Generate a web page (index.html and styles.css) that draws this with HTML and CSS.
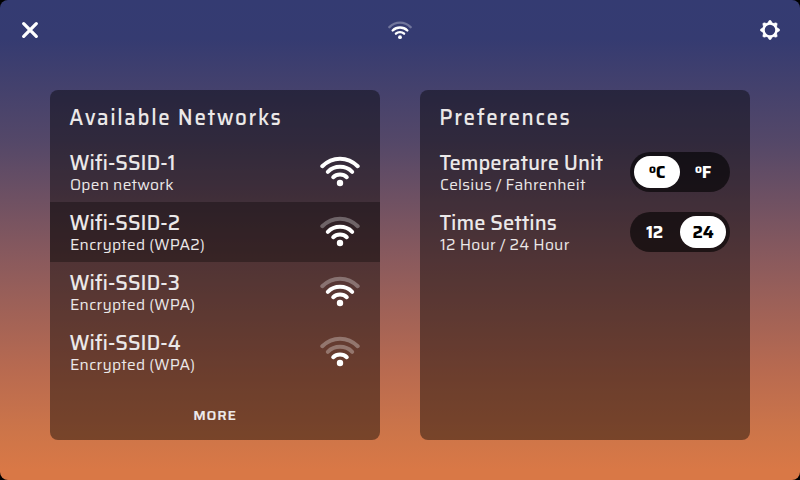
FILE: index.html
```html
<!DOCTYPE html>
<html lang="en">
<head>
<meta charset="utf-8">
<title>Settings</title>
<link rel="stylesheet" href="styles.css">
</head>
<body>
<svg width="0" height="0" class="defs" aria-hidden="true">
  <symbol id="wifi" viewBox="0 0 40 32">
    <path class="outer" d="M2.3 11.2C12.5 1.2 27.5 1.2 37.7 11.2"/>
    <path class="middle" d="M7.8 16.8C14.5 10.2 25.5 10.2 32.2 16.8"/>
    <path class="inner" d="M13.2 22.2C16.8 18.7 23.2 18.7 26.8 22.2"/>
    <circle cx="20" cy="28" r="3.2"/>
  </symbol>
</svg>
<main class="screen">
  <header class="bar">
    <svg class="icon" viewBox="0 0 20 20"><path class="cross" d="M3.7 3.7 16.3 16.3M16.3 3.7 3.7 16.3"/></svg>
    <svg class="wifi small s3"><use href="#wifi"/></svg>
    <svg class="icon" viewBox="0 0 20 20">
      <circle class="ring" cx="10" cy="10" r="6.4"/>
      <path class="teeth" d="M7.6 3.2 9.2.5h1.6L12.4 3.2zM7.6 16.8l1.6 2.7h1.6l1.6-2.7zM3.2 7.6.5 9.2v1.6L3.2 12.4zM16.8 7.6l2.7 1.6v1.6L16.8 12.4zM3.5 6.9 2.8 3.8l1-1 3.1.7zM16.5 6.9l.7-3.1-1-1-3.1.7zM3.5 13.1l-.7 3.1 1 1 3.1-.7zM16.5 13.1l.7 3.1-1 1-3.1-.7z"/>
    </svg>
  </header>
  <div class="panels">
    <section class="panel">
      <h1 class="title">Available Networks</h1>
      <div class="row"><div><div class="name">Wifi-SSID-1</div><div class="sub">Open network</div></div><svg class="wifi s4"><use href="#wifi"/></svg></div>
      <div class="row active"><div><div class="name">Wifi-SSID-2</div><div class="sub">Encrypted (WPA2)</div></div><svg class="wifi s3"><use href="#wifi"/></svg></div>
      <div class="row"><div><div class="name">Wifi-SSID-3</div><div class="sub">Encrypted (WPA)</div></div><svg class="wifi s3"><use href="#wifi"/></svg></div>
      <div class="row"><div><div class="name">Wifi-SSID-4</div><div class="sub">Encrypted (WPA)</div></div><svg class="wifi s2"><use href="#wifi"/></svg></div>
      <div class="more">MORE</div>
    </section>
    <section class="panel">
      <h1 class="title">Preferences</h1>
      <div class="row"><div><div class="name">Temperature Unit</div><div class="sub">Celsius / Fahrenheit</div></div><div class="toggle"><span class="option on">ºC</span><span class="option">ºF</span></div></div>
      <div class="row"><div><div class="name">Time Settins</div><div class="sub">12 Hour / 24 Hour</div></div><div class="toggle twelve"><span class="option">12</span><span class="option on">24</span></div></div>
    </section>
  </div>
</main>
</body>
</html>
```
FILE: styles.css
```css
* { box-sizing: border-box; }
body { margin: 0; background: #000; color: #ebe8e8; font-family: "Saira Semi Condensed", Saira, Roboto, sans-serif; }
.defs { display: none; }
.screen {
  width: 800px; height: 480px; border-radius: 8px; overflow: hidden;
  background: linear-gradient(#343b72 0%, #353b71 8%, #554868 30%, #8a5a5d 54%, #b86a50 77%, #cd7549 90%, #d97846 98%);
}
.bar { height: 60px; padding: 0 20px; display: flex; align-items: center; justify-content: space-between; }
.icon { width: 20px; height: 20px; display: block; }
.cross { stroke: #fff; stroke-width: 3.3; stroke-linecap: round; fill: none; }
.ring { stroke: #fff; stroke-width: 2.3; fill: none; }
.teeth { fill: #fff; stroke: #fff; stroke-width: .6; stroke-linejoin: round; }
.wifi { width: 40px; height: 32px; display: block; fill: #fff; --outer: 1; --middle: 1; }
.wifi.small { width: 24px; height: 20px; }
.outer, .middle, .inner { fill: none; stroke: #fff; stroke-width: 4; stroke-linecap: round; }
.outer { opacity: var(--outer); }
.middle { opacity: var(--middle); }
.s3 { --outer: .3; }
.s2 { --outer: .3; --middle: .3; }
.panels { display: flex; gap: 40px; padding: 30px 50px; }
.panel { width: 330px; height: 350px; border-radius: 8px; background: rgba(0,0,0,.42); display: flex; flex-direction: column; }
.title { margin: 0; height: 52px; padding: 2px 20px 0; font-size: 22px; line-height: 52px; font-weight: 500; letter-spacing: 1.7px; white-space: nowrap; transform: scaleX(.935); transform-origin: 10px 0; }
.row { height: 60px; padding: 2px 20px 0; display: flex; align-items: center; justify-content: space-between; white-space: nowrap; }
.active { background: rgba(0,0,0,.3); }
.name { font-size: 21.5px; line-height: 23px; font-weight: 500; transform: scaleX(.94); transform-origin: -10px 50%; }
.sub { font-size: 15.5px; line-height: 21px; letter-spacing: .25px; }
.row .wifi { margin-top: -4px; }
.more { margin-top: 23px; font-size: 14px; line-height: 20px; font-weight: 600; letter-spacing: .8px; text-align: center; }
.toggle { width: 100px; height: 40px; margin-top: -2px; padding: 4px; border-radius: 20px; background: rgba(0,0,0,.6); display: flex; }
.option { width: 46px; height: 32px; border-radius: 16px; text-align: center; line-height: 33px; font-size: 17px; font-weight: 700; letter-spacing: -.2px; color: #fff; }
.option.on { background: #fff; color: #000; }
.twelve .option:first-child { padding-right: 5px; }
```
